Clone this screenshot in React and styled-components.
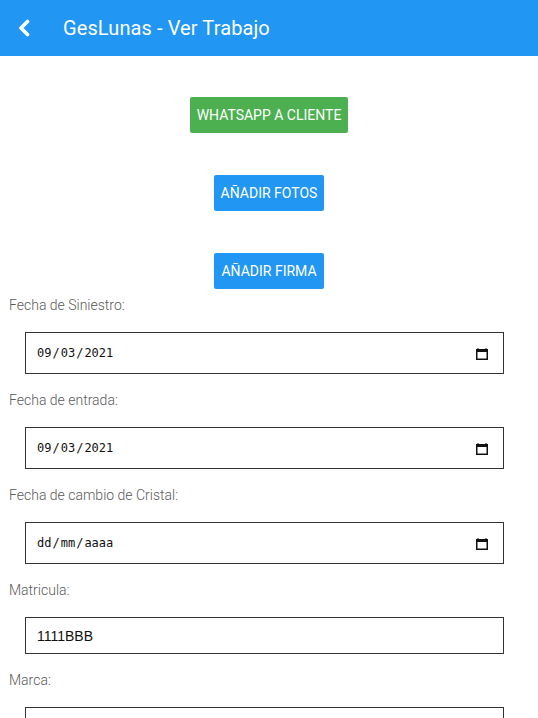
import React from "react";
import styled, { createGlobalStyle } from "styled-components";

const GlobalStyle = createGlobalStyle`
  body {
    margin: 0;
    background: #ffffff;
    font-family: Roboto, "Liberation Sans", Arial, sans-serif;
  }
`;

const Page = styled.div`
  width: 538px;
  min-height: 718px;
  background: #fff;
`;

const Header = styled.header`
  height: 56px;
  background: #2196f3;
  display: flex;
  align-items: center;
  color: #fff;
`;

const BackButton = styled.button`
  width: 63px;
  height: 56px;
  border: none;
  background: transparent;
  display: flex;
  align-items: center;
  justify-content: flex-start;
  padding: 0 0 0 17px;
  cursor: pointer;
`;

const Title = styled.h1`
  margin: 0;
  font-size: 20px;
  font-weight: 400;
  color: #fff;
  letter-spacing: 0.1px;
`;

const Actions = styled.div`
  display: flex;
  flex-direction: column;
  align-items: center;
  gap: 42px;
  padding-top: 41px;
`;

const ActionButton = styled.button`
  height: 36px;
  padding: 0 7px;
  border: none;
  border-radius: 2px;
  background: ${(p) => (p.$tone === "green" ? "#4caf50" : "#2196f3")};
  color: #fff;
  font-family: Roboto, "Liberation Sans", Arial, sans-serif;
  font-size: 14px;
  font-weight: 400;
  text-transform: uppercase;
  cursor: pointer;
`;

const Form = styled.div`
  padding-top: 6px;
`;

const Field = styled.div`
  display: flex;
  flex-direction: column;
`;

const Label = styled.label`
  display: block;
  height: 20px;
  line-height: 20px;
  padding-left: 9px;
  margin-bottom: 17px;
  font-size: 14px;
  font-weight: 300;
  color: #5a5a5a;
`;

const InputBox = styled.div`
  box-sizing: border-box;
  width: 479px;
  height: ${(p) => (p.$date ? "42px" : "37px")};
  margin: 0 0 16px 25px;
  border: 1px solid #333;
  display: flex;
  align-items: center;
  justify-content: space-between;
  padding: 0 15px 0 11px;
  background: #fff;
`;

const DateText = styled.span`
  font-family: "DejaVu Sans Mono", "Liberation Mono", monospace;
  font-size: 12px;
  color: #111;
`;

const Sep = styled.span`
  margin: 0 1px;
`;

const TextInput = styled.input`
  border: none;
  outline: none;
  padding: 0;
  width: 100%;
  font-family: "Liberation Sans", Arial, sans-serif;
  font-size: 14px;
  color: #111;
  background: transparent;
`;

const Chevron = () => (
  <svg width="14" height="18" viewBox="0 0 14 18">
    <path
      d="M10.5 2.5 L4 9 L10.5 15.5"
      fill="none"
      stroke="#fff"
      strokeWidth="3.6"
      strokeLinecap="round"
      strokeLinejoin="round"
    />
  </svg>
);

const CalendarIcon = () => (
  <svg width="12" height="14" viewBox="0 0 12 14">
    <rect x="1.5" y="2" width="1" height="2" fill="#111" />
    <rect x="9.5" y="2" width="1" height="2" fill="#111" />
    <rect x="0.75" y="3.75" width="10.5" height="9.5" fill="none" stroke="#111" strokeWidth="1.5" />
    <rect x="0" y="3" width="12" height="3" fill="#111" />
  </svg>
);

const DateValue = ({ value }) => {
  const parts = value.split("/");
  return (
    <DateText>
      {parts[0]}
      <Sep>/</Sep>
      {parts[1]}
      <Sep>/</Sep>
      {parts[2]}
    </DateText>
  );
};

const fields = [
  { label: "Fecha de Siniestro:", date: "09/03/2021" },
  { label: "Fecha de entrada:", date: "09/03/2021" },
  { label: "Fecha de cambio de Cristal:", date: "dd/mm/aaaa" },
  { label: "Matricula:", text: "1111BBB" },
  { label: "Marca:", text: "" },
];

export default function App() {
  return (
    <Page>
      <GlobalStyle />
      <Header>
        <BackButton aria-label="Volver">
          <Chevron />
        </BackButton>
        <Title>GesLunas - Ver Trabajo</Title>
      </Header>
      <Actions>
        <ActionButton $tone="green">Whatsapp a cliente</ActionButton>
        <ActionButton>Añadir fotos</ActionButton>
        <ActionButton>Añadir firma</ActionButton>
      </Actions>
      <Form>
        {fields.map((f) => (
          <Field key={f.label}>
            <Label>{f.label}</Label>
            {f.date ? (
              <InputBox $date>
                <DateValue value={f.date} />
                <CalendarIcon />
              </InputBox>
            ) : (
              <InputBox>
                <TextInput defaultValue={f.text} />
              </InputBox>
            )}
          </Field>
        ))}
      </Form>
    </Page>
  );
}
